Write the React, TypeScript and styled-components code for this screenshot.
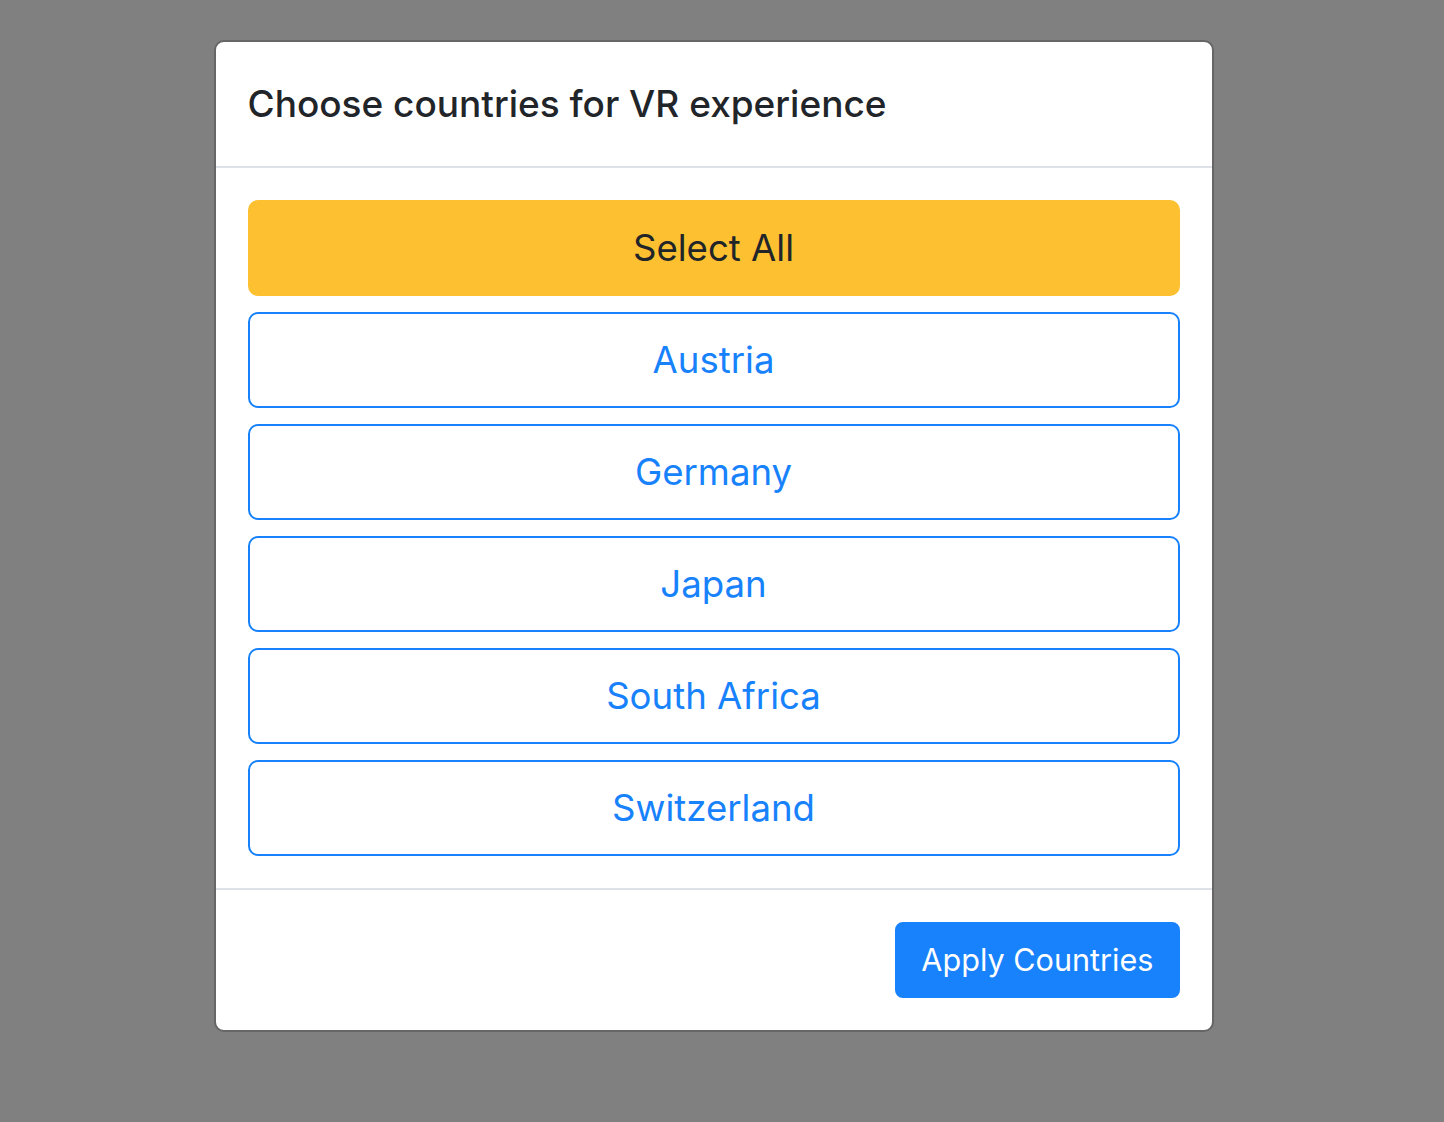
import React from "react";
import styled, { createGlobalStyle } from "styled-components";

const GlobalStyle = createGlobalStyle`
  html, body {
    margin: 0;
    padding: 0;
    background: #808080;
    font-family: Inter, "Liberation Sans", Arial, sans-serif;
  }
  * { box-sizing: border-box; }
`;

const Backdrop = styled.div`
  min-height: 1122px;
  padding: 40px 17px 0 0;
  display: flex;
  justify-content: center;
  align-items: flex-start;
`;

const Dialog = styled.div`
  width: 1000px;
  background: #fff;
  border: 2px solid #666666;
  border-radius: 10px;
  display: flex;
  flex-direction: column;
`;

const Header = styled.div`
  padding: 32px;
  border-bottom: 2px solid #dee2e6;
`;

const Title = styled.h5`
  margin: 0;
  font-size: 37px;
  font-weight: 500;
  line-height: 60px;
  color: #212529;
`;

const Body = styled.div`
  padding: 32px;
  display: flex;
  flex-direction: column;
  gap: 16px;
`;

const BlockButton = styled.button<{ $variant: "warning" | "outline" }>`
  display: block;
  width: 100%;
  height: 96px;
  font-family: inherit;
  font-size: 36.6px;
  font-weight: 400;
  line-height: 60px;
  border-radius: 10px;
  cursor: pointer;
  border: 2px solid ${(p) => (p.$variant === "warning" ? "#fdc030" : "#1882fc")};
  background: ${(p) => (p.$variant === "warning" ? "#fdc030" : "#fff")};
  color: ${(p) => (p.$variant === "warning" ? "#212529" : "#1882fc")};
`;

const Footer = styled.div`
  padding: 24px;
  border-top: 2px solid #dee2e6;
  display: flex;
  justify-content: flex-end;
`;

const PrimaryButton = styled.button`
  margin: 8px;
  height: 76px;
  padding: 0 24px;
  font-family: inherit;
  font-size: 30.6px;
  line-height: 48px;
  border: 2px solid #1882fc;
  background: #1882fc;
  color: #fff;
  border-radius: 8px;
  cursor: pointer;
`;

const countries = ["Austria", "Germany", "Japan", "South Africa", "Switzerland"];

export default function App() {
  return (
    <>
      <GlobalStyle />
      <Backdrop>
        <Dialog>
          <Header>
            <Title>Choose countries for VR experience</Title>
          </Header>
          <Body>
            <BlockButton $variant="warning">Select All</BlockButton>
            {countries.map((c) => (
              <BlockButton key={c} $variant="outline">
                {c}
              </BlockButton>
            ))}
          </Body>
          <Footer>
            <PrimaryButton>Apply Countries</PrimaryButton>
          </Footer>
        </Dialog>
      </Backdrop>
    </>
  );
}
